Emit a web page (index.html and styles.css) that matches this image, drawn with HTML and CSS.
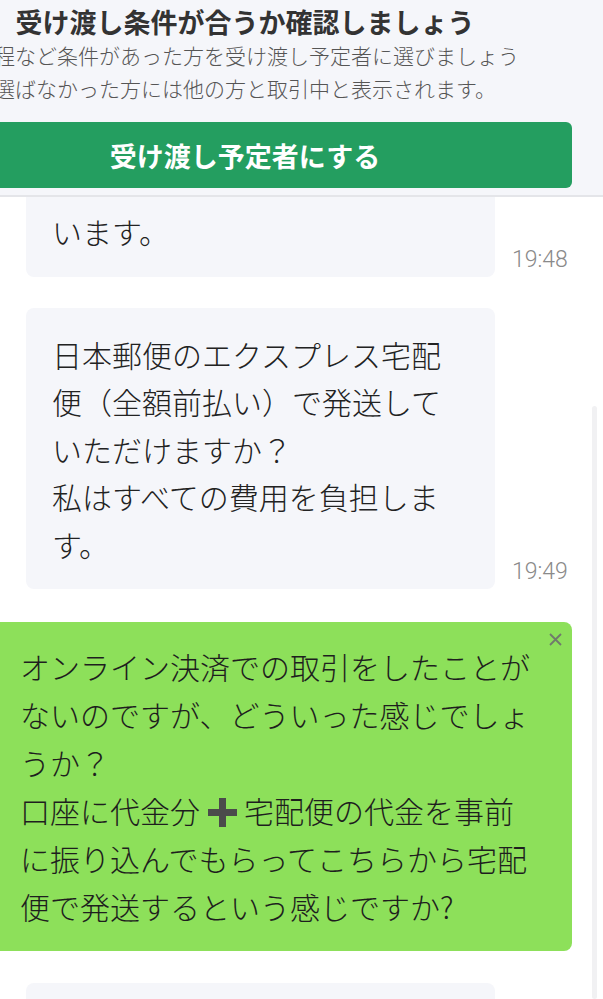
FILE: index.html
```html
<!DOCTYPE html>
<html lang="ja">
<head>
<meta charset="utf-8">
<link rel="stylesheet" href="styles.css">
</head>
<body>
<div class="page">
  <header class="header">
    <div class="header-inner">
      <h1 class="title">受け渡し条件が合うか確認しましょう</h1>
      <p class="sub">程など条件があった方を受け渡し予定者に選びましょう</p>
      <p class="sub">選ばなかった方には他の方と取引中と表示されます。</p>
      <button class="btn">受け渡し予定者にする</button>
    </div>
  </header>
  <main class="chat">
    <div class="row">
      <div class="bubble bubble-cut">います。</div>
      <span class="time">19:48</span>
    </div>
    <div class="row">
      <div class="bubble bubble-tall">日本郵便のエクスプレス宅配便（全額前払い）で発送していただけますか？<br>私はすべての費用を負担します。</div>
      <span class="time">19:49</span>
    </div>
    <div class="mine">
      <span class="close"><svg width="13" height="13" viewBox="0 0 13 13"><path d="M1 1L12 12M12 1L1 12" stroke="#707a6c" stroke-width="1.8" fill="none"/></svg></span>
      <div class="mine-text">オンライン決済での取引をしたことがないのですが、どういった感じでしょうか？<br>口座に代金分<span class="plus"><svg width="29" height="29" viewBox="0 0 29 29"><path d="M11 0h7v11h11v7H18v11h-7V18H0v-7h11z" fill="#4b4b4b"/></svg></span>宅配便の代金を事前に振り込んでもらってこちらから宅配便で発送するという感じですか?</div>
    </div>
    <div class="row">
      <div class="bubble bubble-next"></div>
    </div>
  </main>
  <div class="scrollbar"></div>
</div>
</body>
</html>
```

FILE: styles.css
```css
html, body {
  margin: 0;
  padding: 0;
  background: #ffffff;
}
body {
  font-family: "Noto Sans CJK JP", "Noto Sans", sans-serif;
  color: #222;
}
.page {
  position: relative;
  width: 603px;
  height: 999px;
  overflow: hidden;
}
.header {
  background: #f5f6fa;
  border-bottom: 2px solid #e4e5e9;
  padding: 5px 0 7px;
}
.header-inner {
  margin-left: -82px;
  width: 654px;
  display: flex;
  flex-direction: column;
}
.title {
  margin: 0;
  font-size: 27px;
  line-height: 34px;
  font-weight: 700;
  color: #333;
  text-align: center;
}
.sub {
  margin: 0;
  padding-left: 76px;
  font-size: 21px;
  line-height: 33px;
  font-weight: 300;
  color: #555;
  white-space: nowrap;
}
.btn {
  margin-top: 17px;
  height: 66px;
  border: none;
  border-radius: 6px;
  background: #249e60;
  color: #fff;
  font-family: "Noto Sans CJK JP", sans-serif;
  font-size: 27px;
  font-weight: 700;
  padding: 0;
}
.chat {
  display: flex;
  flex-direction: column;
}
.row {
  display: flex;
  align-items: flex-end;
  margin-bottom: 31px;
}
.bubble {
  margin-left: 26px;
  width: 469px;
  box-sizing: border-box;
  background: #f5f6fa;
  border-radius: 8px;
  padding: 23px 26px 21px;
  font-size: 30px;
  line-height: 47.5px;
  font-weight: 300;
  color: #222;
}
.bubble-cut {
  padding-top: 11px;
  border-top-left-radius: 0;
  border-top-right-radius: 0;
}
.bubble-next {
  height: 60px;
  padding: 0;
}
.time {
  margin-left: 17px;
  margin-bottom: 5px;
  font-family: Roboto, "Noto Sans", sans-serif;
  font-weight: 300;
  font-size: 23px;
  line-height: 24px;
  color: #8a8a8a;
}
.mine {
  position: relative;
  margin-left: -20px;
  margin-top: 2px;
  margin-bottom: 32px;
  width: 592px;
  box-sizing: border-box;
  background: #8de05a;
  border-radius: 8px;
  padding: 20px 34px 21px 40px;
}
.mine-text {
  font-size: 30px;
  line-height: 48px;
  font-weight: 300;
  color: #1e1e1e;
}
.plus {
  display: inline-block;
  width: 44px;
  text-align: center;
}
.plus svg {
  display: inline-block;
  vertical-align: -4px;
}
.close {
  position: absolute;
  top: 11px;
  right: 10px;
  line-height: 0;
}
.scrollbar {
  position: absolute;
  left: 592px;
  top: 406px;
  width: 5px;
  bottom: 0;
  background: #f1f1f3;
  border-radius: 3px;
}
```
